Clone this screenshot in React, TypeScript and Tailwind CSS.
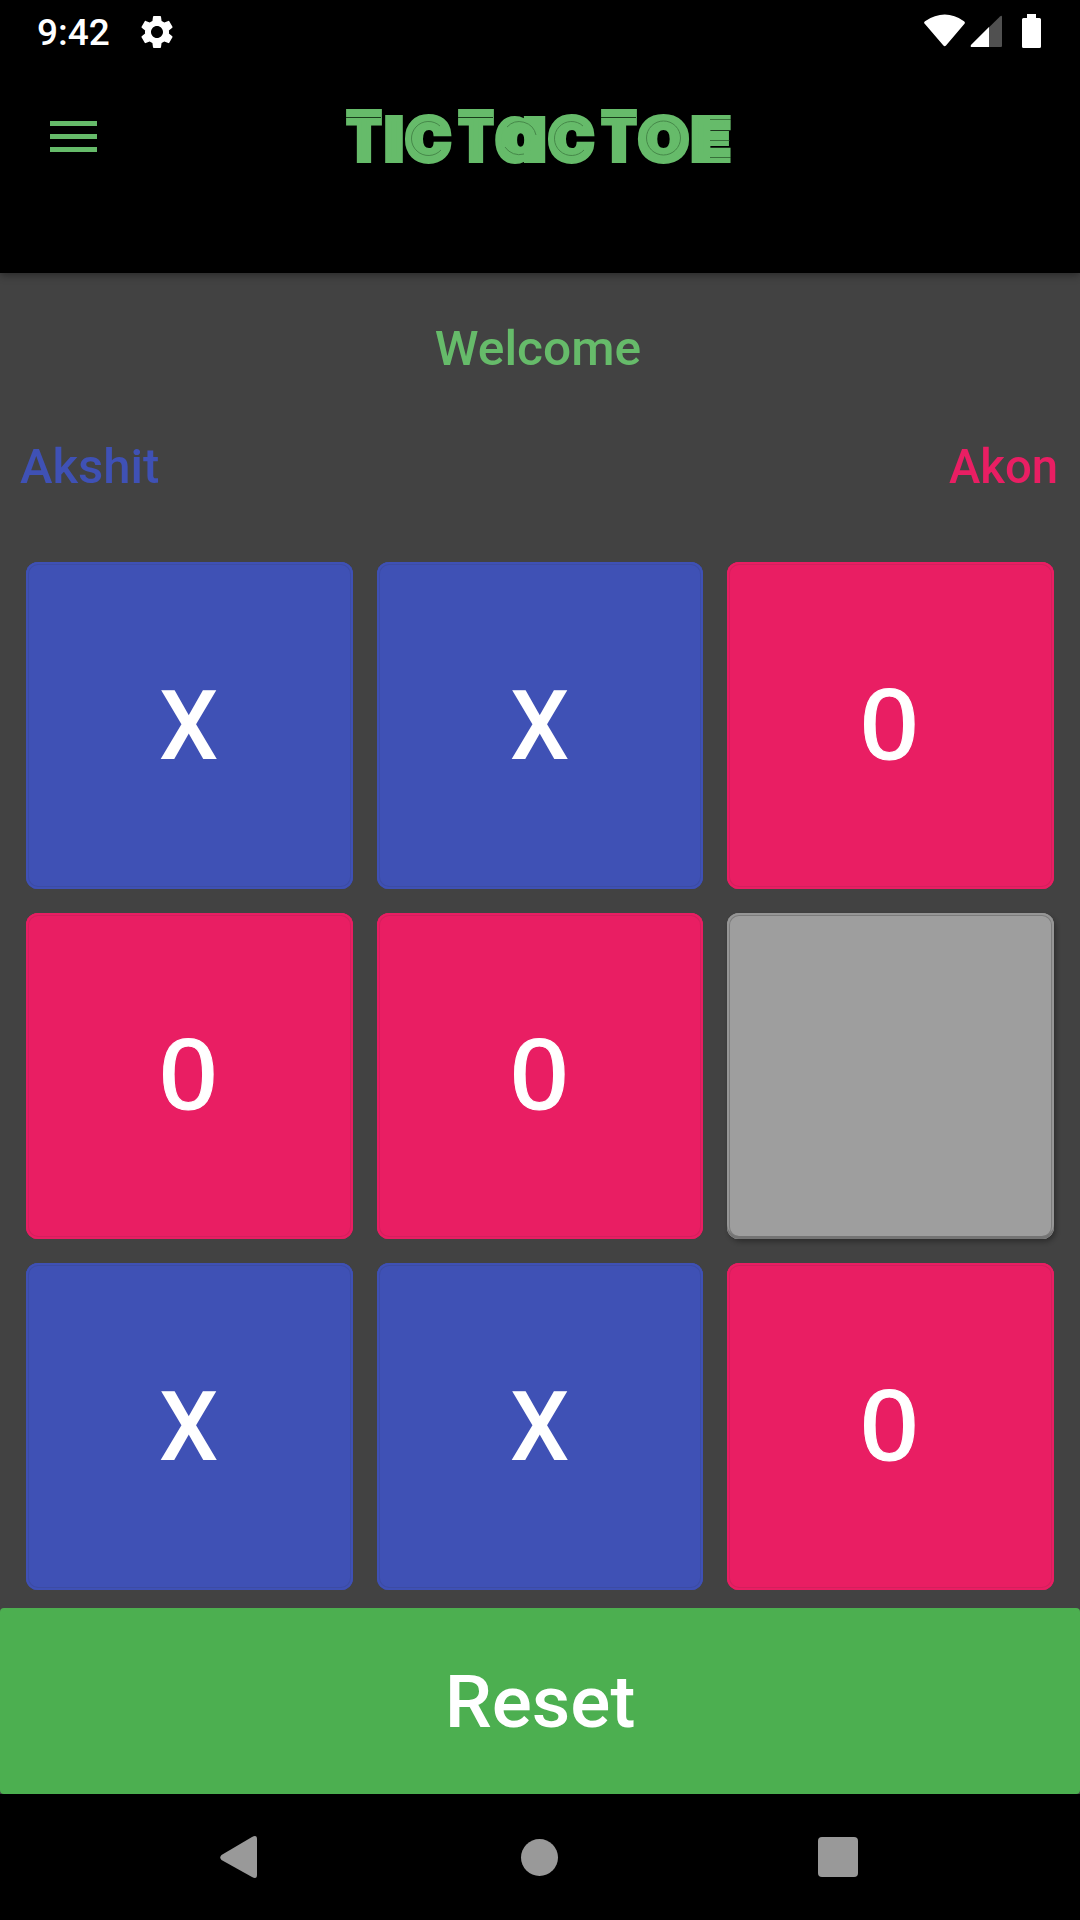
import React from "react";
import { MdSettings } from "react-icons/md";

type Mark = "X" | "O" | "";

const board: Mark[] = ["X", "X", "O", "O", "O", "", "X", "X", "O"];

const tileStyle: Record<string, string> = {
  X: "bg-[#3f51b5] shadow-[inset_0_0_0_2px_#3f51b5,inset_0_0_0_3px_#3c4ca4]",
  O: "bg-[#e91e63] shadow-[inset_0_0_0_2px_#e91e63,inset_0_0_0_3px_#d3205d]",
  "": "bg-[#9e9e9e] shadow-[inset_0_-3px_0_#747474,inset_0_0_0_2px_#969696,inset_0_0_0_3px_#7c7c7c,2px_3px_5px_rgba(0,0,0,0.3)]",
};

function Tile({ mark }: { mark: Mark }) {
  return (
    <button className={`flex items-center justify-center rounded-[12px] text-white ${tileStyle[mark]}`}>
      {mark === "X" && (
        <span className="mt-[2px] mr-[1px] block origin-center scale-x-[0.97] text-[97px] leading-none font-medium">X</span>
      )}
      {mark === "O" && (
        <span className="mt-[3px] mr-[2px] block origin-center scale-x-[1.08] font-['DejaVu_Sans_Mono',monospace] text-[94px] leading-none [-webkit-text-stroke:1px_white]">
          O
        </span>
      )}
    </button>
  );
}

const letters = [
  { c: "T", x: 2, w: 34, size: 66 },
  { c: "I", x: 40.5, w: 17, size: 58 },
  { c: "C", x: 61, w: 44, size: 58 },
  { c: "T", x: 114, w: 34, size: 66 },
  { c: "a", x: 151, w: 50, size: 75 },
  { c: "C", x: 204, w: 44, size: 58 },
  { c: "T", x: 257, w: 34, size: 66 },
  { c: "O", x: 294, w: 49, size: 58 },
  { c: "E", x: 347, w: 38, size: 58 },
];

function Wordmark() {
  return (
    <svg className="overflow-visible" width="388" height="62" viewBox="0 0 388 62" aria-label="TicTacToe">
      <text
        className="fill-[#66bb6a] stroke-[#66bb6a] font-['Inter',sans-serif] font-black [font-feature-settings:'cv11']"
        strokeWidth="6"
        y="54.5"
      >
        {letters.map((l, i) => (
          <tspan key={i} x={l.x} fontSize={l.size} textLength={l.w} lengthAdjust="spacingAndGlyphs">
            {l.c}
          </tspan>
        ))}
      </text>
      <g fill="none" stroke="#173d19" strokeWidth="1">
        <path d="M1 12.500h35M113 12.500h35M256 12.500h35" />
        <path d="M365 14.500h21M365 35.500h20M365 52.500h21" opacity=".6" />
        <g opacity=".4">
          <circle cx="318.500" cy="33" r="17" />
          <path d="M95 21a17 17 0 1 0 1 24M238 21a17 17 0 1 0 1 24M162 22a17 17 0 0 1 29 8M160 42a17 17 0 0 0 19 7" />
        </g>
      </g>
    </svg>
  );
}

export default function App() {
  return (
    <div className="flex h-[1920px] w-[1080px] flex-col overflow-hidden bg-[#424242] font-['Roboto',sans-serif]">
      <header className="z-10 h-[273px] shrink-0 bg-black shadow-[0_2px_8px_rgba(0,0,0,0.4)]">
        <div className="flex h-[63px] items-center pr-[38px] pl-[37px] text-white">
          <span className="mt-[2px] text-[37px] leading-none font-medium">9:42</span>
          <MdSettings className="ml-[27px] size-[40px]" />
          <svg className="ml-auto" width="120" height="36" viewBox="0 0 120 36">
            <path d="M2.500 9.500Q1.500 8.500 3 7.200Q23 -6 42 7.200Q43.500 8.500 42.500 9.800L24 31.500Q22.700 33 21.400 31.500Z" fill="white" />
            <path d="M49 31L78 2.500Q80 1 80 3V32Q80 33 79 33H50Q48 33 49 31Z" fill="#505050" />
            <path d="M49 31L67 13V33H50Q48 33 49 31Z" fill="white" />
            <path d="M105 0h9v4h3.500q1.500 0 1.500 1.500v27q0 1.500-1.500 1.500h-16q-1.500 0-1.500-1.500v-27q0-1.500 1.500-1.500h3.500z" fill="white" />
          </svg>
        </div>
        <div className="flex h-[146px] items-center pl-[50px]">
          <div className="flex w-[47px] flex-col gap-[8px]">
            <div className="h-[5px] bg-[#66bb6a]" />
            <div className="h-[5px] bg-[#66bb6a]" />
            <div className="h-[5px] bg-[#66bb6a]" />
          </div>
          <div className="ml-[248px]">
            <Wordmark />
          </div>
        </div>
      </header>

      <main className="flex flex-1 flex-col">
        <h1 className="mt-[51px] mr-[4px] scale-x-[1.015] text-center text-[49px] leading-[50px] font-medium text-[#66bb6a]">
          Welcome
        </h1>
        <div className="mt-[68px] flex justify-between pr-[22px] pl-[20px] text-[49px] leading-[50px] font-medium">
          <span className="text-[#3f51b5]">Akshit</span>
          <span className="origin-right scale-x-[0.965] text-[#e91e63]">Akon</span>
        </div>
        <div className="mx-[26px] mt-[70px] grid h-[1028px] grid-cols-3 grid-rows-3 gap-[24px]">
          {board.map((mark, i) => (
            <Tile key={i} mark={mark} />
          ))}
        </div>
        <button className="mt-[18px] flex h-[186px] items-center justify-center rounded-[4px] bg-[#4caf50] text-[73px] leading-none font-medium text-white">
          <span className="mt-[3px] block scale-x-[1.025]">Reset</span>
        </button>
      </main>

      <nav className="flex h-[126px] shrink-0 items-center bg-black pl-[220px]">
        <svg width="37" height="42" viewBox="0 0 37 42" fill="#999">
          <path d="M1.500 19L32 1Q37-1.500 37 3V39Q37 43.500 32 41L1.500 24Q-1 21.500 1.500 19Z" />
        </svg>
        <div className="ml-[264px] size-[37px] rounded-full bg-[#999]" />
        <div className="ml-[260px] size-[40px] rounded-[4px] bg-[#999]" />
      </nav>
    </div>
  );
}
